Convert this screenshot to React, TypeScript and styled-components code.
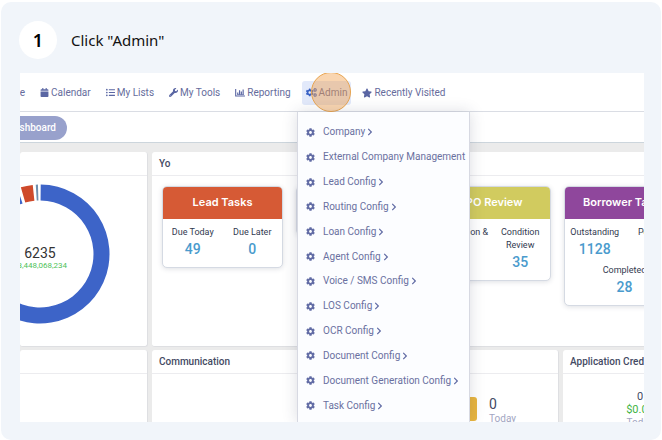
import React from 'react';
import styled, { createGlobalStyle, css } from 'styled-components';
import { FaCalendar, FaListUl, FaWrench, FaCogs, FaStar, FaCog, FaChevronRight, FaHome } from 'react-icons/fa';

const GlobalStyle = createGlobalStyle`
  *, *::before, *::after { box-sizing: border-box; }
  body { margin: 0; background: #fff; font-family: Roboto, sans-serif; color: #2b3047; }
  button { font: inherit; border: 0; background: none; padding: 0; color: inherit; cursor: pointer; }
`;

const Step = styled.article`
  display: flex;
  flex-direction: column;
  min-height: calc(100vh - 2px);
  margin: 2px 1px 0;
  padding: 19px 17px 18px 19px;
  border-radius: 10px;
  background: #f1f5fa;
`;

const StepHeader = styled.header`
  display: flex;
  align-items: center;
  gap: 14px;
  margin: 0 0 14px -1px;
`;

const StepNumber = styled.span`
  display: flex;
  align-items: center;
  justify-content: center;
  width: 38px;
  height: 38px;
  border-radius: 50%;
  background: #fff;
  color: #000;
  font: 600 18px/24px 'Noto Sans', sans-serif;
`;

const StepTitle = styled.h1`
  margin: 0;
  color: #111;
  font: 400 15px/20px 'Noto Sans', sans-serif;
`;

const Shot = styled.section`
  position: relative;
  display: flex;
  flex: 1;
  flex-direction: column;
  overflow: hidden;
  background: #ebebeb;
`;

const NavBar = styled.nav`
  display: flex;
  align-items: center;
  gap: 15px;
  height: 39px;
  padding-top: 1px;
  border-bottom: 1px solid #dadde4;
  background: #fff;
`;

const NavItem = styled.button<{ $active?: boolean }>`
  position: relative;
  display: flex;
  flex: none;
  align-items: center;
  gap: 2px;
  color: #666c9c;
  font-size: 10px;
  line-height: 24px;
  white-space: nowrap;
  svg { flex: none; color: #5a66a3; }
  ${p => p.$active && css`
    margin: 0 -4px;
    padding: 0 4px;
    border-radius: 3px;
    background: #e2e9fa;
    svg { color: #3760c4; }
  `}
`;

const CutStart = styled.div<{ $width: number }>`
  display: flex;
  flex: none;
  justify-content: flex-end;
  width: ${p => p.$width}px;
`;

const ClickMarker = styled.span`
  position: absolute;
  top: -9px;
  right: 0;
  width: 40px;
  height: 40px;
  border: 1px solid #e8a44f;
  border-radius: 50%;
  background: rgba(240, 156, 66, 0.42);
`;

const TabBar = styled.div`
  display: flex;
  align-items: center;
  height: 31px;
  padding-top: 1px;
  border-bottom: 1px solid #ccd5dc;
  background: #fff;
`;

const Tab = styled.button`
  flex: none;
  padding: 0 11px;
  border-radius: 12px;
  background: #98a1cc;
  color: #fff;
  font-size: 10px;
  font-weight: 500;
  line-height: 24px;
`;

const Board = styled.main`
  display: flex;
  flex: 1;
  flex-direction: column;
  gap: 3px;
  padding-top: 9px;
`;

const BoardRow = styled.div<{ $columns: string; $grow?: boolean }>`
  display: grid;
  grid-template-columns: ${p => p.$columns};
  gap: 4px;
  ${p => (p.$grow ? 'flex: 1;' : 'min-height: 195px;')}
`;

const Panel = styled.section`
  min-width: 0;
  border: 1px solid #dedfe2;
  border-width: 0 1px 1px 0;
  border-radius: 3px;
  background: #fff;
  &:last-child {
    border-right: 0;
    border-radius: 3px 0 0 3px;
  }
  ${BoardRow}:last-child > & {
    border-bottom: 0;
    border-bottom-left-radius: 0;
    border-bottom-right-radius: 0;
  }
`;

const PanelTitle = styled.h2`
  height: 24px;
  margin: 0;
  padding: 0 7px;
  border-bottom: 1px solid #ececef;
  color: #444a63;
  font-size: 10px;
  font-weight: 500;
  line-height: 24px;
  white-space: nowrap;
`;

const Donut = styled.svg`
  display: block;
  width: 90px;
  height: 140px;
  margin-top: 8px;
`;

const CardRow = styled.div`
  display: flex;
  align-items: flex-start;
  gap: 13px;
  padding: 10px 10px 0;
`;

const Card = styled.section`
  flex: none;
  width: 121px;
  overflow: hidden;
  border: 1px solid #d5dae3;
  border-radius: 5px;
  background: #fff;
  box-shadow: 0 1px 5px rgba(50, 60, 90, 0.16);
`;

const CardTitle = styled.h3<{ $color: string }>`
  min-height: 33px;
  margin: -1px -1px 0;
  background: ${p => p.$color};
  color: #fff;
  font: 600 11px/33px Inter, sans-serif;
  text-align: center;
  white-space: nowrap;
`;

const Stats = styled.div`
  display: flex;
  flex-wrap: wrap;
  padding: 5px 0;
`;

const Stat = styled.div<{ $wide?: boolean }>`
  width: ${p => (p.$wide ? '100%' : '50%')};
  padding-bottom: 3px;
  text-align: center;
  & + & { border-left: ${p => (p.$wide ? '0' : '1px solid #e8eaee')}; }
`;

const StatLabel = styled.div`
  color: #333a50;
  font-size: 9px;
  line-height: 13px;
  padding-top: 2px;
`;

const StatValue = styled.div`
  color: #4a9bcd;
  font-size: 14px;
  font-weight: 500;
  line-height: 20px;
`;

const Communication = styled.div`
  display: flex;
  justify-content: flex-end;
  gap: 12px;
  padding: 22px 42px 0 0;
`;

const Badge = styled.span`
  display: flex;
  align-items: center;
  justify-content: center;
  width: 26px;
  height: 24px;
  margin-top: 1px;
  border-radius: 3px;
  background: #e8b53f;
`;

const Count = styled.div`
  height: 16px;
  color: #444a63;
  font-size: 14px;
  line-height: 16px;
`;

const Caption = styled.div`
  height: 6px;
  color: #a2a6c2;
  font-size: 10px;
  line-height: 14px;
`;

const Credit = styled.div`
  display: flex;
  flex-direction: column;
  align-items: center;
  width: 154px;
  padding-top: 16px;
  color: #444a63;
  font-size: 11px;
  line-height: 13px;
`;

const Money = styled.span`
  color: #3fb43f;
`;

const Menu = styled.ul`
  position: absolute;
  top: 39px;
  bottom: 0;
  left: 277px;
  display: flex;
  flex-direction: column;
  width: 173px;
  margin: 0;
  padding: 8px 0 4px;
  border: 1px solid #d7d9e2;
  border-width: 0 1px;
  background: #fcfdff;
  box-shadow: 0 0 14px rgba(40, 50, 80, 0.17);
  list-style: none;
`;

const MenuItem = styled.li`
  display: flex;
  flex: 1;
  align-items: center;
`;

const MenuButton = styled.button`
  display: flex;
  align-items: center;
  padding-left: 8px;
  color: #6a70a0;
  font-size: 10px;
  line-height: 16px;
  white-space: nowrap;
  svg { flex: none; color: #626ca5; }
`;

const MenuText = styled.span`
  margin: 0 1px 0 8px;
`;

const menuItems = ['Company', 'External Company Management', 'Lead Config', 'Routing Config', 'Loan Config', 'Agent Config', 'Voice / SMS Config', 'LOS Config', 'OCR Config', 'Document Config', 'Document Generation Config', 'Task Config'];

const arc = (from: number, to: number) => {
  const at = (deg: number, r: number) => {
    const a = (deg * Math.PI) / 180;
    return `${(40 + r * Math.sin(a)).toFixed(2)} ${(254 - r * Math.cos(a)).toFixed(2)}`;
  };
  const big = to - from > 180 ? 1 : 0;
  return `M${at(from, 69.5)}A69.5 69.5 0 ${big} 1 ${at(to, 69.5)}L${at(to, 53.5)}A53.5 53.5 0 ${big} 0 ${at(from, 53.5)}Z`;
};

const ChartIcon = () => (
  <svg width="10" height="9" viewBox="0 0 11 10" fill="none" stroke="currentColor" aria-hidden="true">
    <path d="M.7 1v7.8H11" strokeWidth="1.2" />
    <path d="M3 7.5V5M5 7.5V2.5M7 7.5V4M9 7.5V1.8" strokeWidth="1.3" />
    <path d="M2.5 7.3h7.3" strokeWidth=".8" />
  </svg>
);

const Figure = ({ label, value, wide }: { label: React.ReactNode; value?: string; wide?: boolean }) => (
  <Stat $wide={wide}>
    <StatLabel>{label}</StatLabel>
    <StatValue>{value}</StatValue>
  </Stat>
);

export default function App() {
  return (
    <>
      <GlobalStyle />
      <Step>
        <StepHeader>
          <StepNumber>1</StepNumber>
          <StepTitle>Click "Admin"</StepTitle>
        </StepHeader>
        <Shot>
          <NavBar>
            <CutStart $width={5}><NavItem><FaHome size={9} />Home</NavItem></CutStart>
            <NavItem><FaCalendar size={9} />Calendar</NavItem>
            <NavItem><FaListUl size={9} />My Lists</NavItem>
            <NavItem><FaWrench size={9} />My Tools</NavItem>
            <NavItem><ChartIcon />Reporting</NavItem>
            <NavItem $active><FaCogs size={11} />Admin<ClickMarker /></NavItem>
            <NavItem><FaStar size={10} />Recently Visited</NavItem>
          </NavBar>
          <TabBar>
            <CutStart $width={47}><Tab>Dashboard</Tab></CutStart>
          </TabBar>
          <Board>
            <BoardRow $columns="128px minmax(0, 1fr)">
              <Panel>
                <PanelTitle />
                <Donut viewBox="20 184 90 140" role="img" aria-label="6235 loans">
                  <path d={arc(0.6, 341)} fill="#3d64c8" />
                  <path d={arc(344, 354)} fill="#cf4a2b" />
                  <path d={arc(356.5, 358.3)} fill="#6f8fae" />
                  <text x="40" y="258" textAnchor="middle" fontSize="14" fill="#333">6235</text>
                  <text x="40" y="268" textAnchor="middle" fontSize="8" fill="#4fc25a">$3,448,068,234</text>
                </Donut>
              </Panel>
              <Panel>
                <PanelTitle>Yo</PanelTitle>
                <CardRow>
                  <Card>
                    <CardTitle $color="#d65a35">Lead Tasks</CardTitle>
                    <Stats>
                      <Figure label="Due Today" value="49" />
                      <Figure label="Due Later" value="0" />
                    </Stats>
                  </Card>
                  <Card>
                    <CardTitle $color="#fff" />
                    <Stats><Figure label="" value="" wide /></Stats>
                  </Card>
                  <Card>
                    <CardTitle $color="#d1cb5f">TPO Review</CardTitle>
                    <Stats>
                      <Figure label="Submission &" />
                      <Figure label={<>Condition<br />Review</>} value="35" />
                    </Stats>
                  </Card>
                  <Card>
                    <CardTitle $color="#8f479c">Borrower Tasks</CardTitle>
                    <Stats>
                      <Figure label="Outstanding" value="1128" />
                      <Figure label="Pending" />
                      <Figure label="Completed" value="28" wide />
                    </Stats>
                  </Card>
                </CardRow>
              </Panel>
            </BoardRow>
            <BoardRow $columns="128px 407px minmax(0, 1fr)" $grow>
              <Panel><PanelTitle /></Panel>
              <Panel>
                <PanelTitle>Communication</PanelTitle>
                <Communication>
                  <Badge>
                    <svg width="14" height="14" viewBox="0 0 14 14" aria-hidden="true"><circle cx="7" cy="7" r="5" fill="#fff" /></svg>
                  </Badge>
                  <div>
                    <Count>0</Count>
                    <Caption>Today</Caption>
                  </div>
                </Communication>
              </Panel>
              <Panel>
                <PanelTitle>Application Credit</PanelTitle>
                <Credit>
                  <span>0</span>
                  <Money>$0.00</Money>
                  <Caption as="span">Today</Caption>
                </Credit>
              </Panel>
            </BoardRow>
          </Board>
          <Menu>
            {menuItems.map(item => (
              <MenuItem key={item}>
                <MenuButton>
                  <FaCog size={9} />
                  <MenuText>{item}</MenuText>
                  {item !== 'External Company Management' && <FaChevronRight size={8} />}
                </MenuButton>
              </MenuItem>
            ))}
          </Menu>
        </Shot>
      </Step>
    </>
  );
}
